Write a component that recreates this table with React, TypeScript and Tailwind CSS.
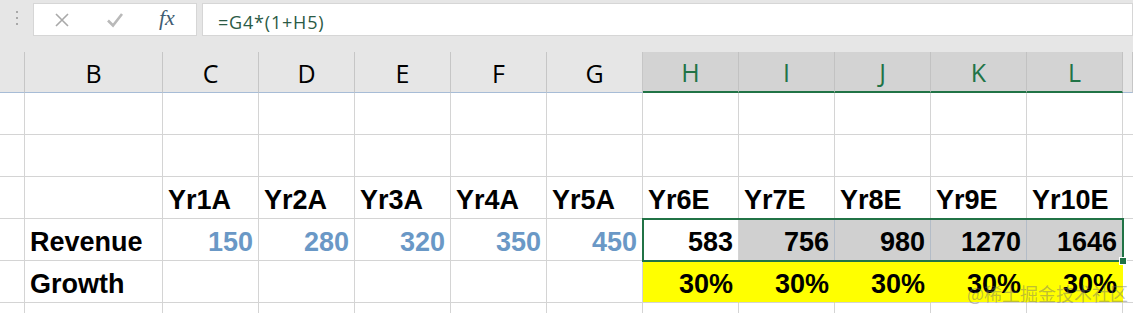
import React from 'react';

const COLS = ['A', 'B', 'C', 'D', 'E', 'F', 'G', 'H', 'I', 'J', 'K', 'L', 'M'];
const SELECTED = ['H', 'I', 'J', 'K', 'L'];

type CellData = {
  text?: string;
  align?: 'left' | 'right';
  tone?: 'black' | 'blue';
  fill?: 'none' | 'gray' | 'yellow';
};

const years = ['Yr1A', 'Yr2A', 'Yr3A', 'Yr4A', 'Yr5A', 'Yr6E', 'Yr7E', 'Yr8E', 'Yr9E', 'Yr10E'];
const actuals = ['150', '280', '320', '350', '450'];
const estimates = ['583', '756', '980', '1270', '1646'];

const empty = (): CellData[] => COLS.map(() => ({}));

const rows: CellData[][] = [
  empty(),
  empty(),
  [{}, {}, ...years.map((y) => ({ text: y, align: 'left' as const })), {}],
  [
    {},
    { text: 'Revenue', align: 'left' },
    ...actuals.map((n) => ({ text: n, align: 'right' as const, tone: 'blue' as const })),
    ...estimates.map((n, i) => ({
      text: n,
      align: 'right' as const,
      fill: i === 0 ? ('none' as const) : ('gray' as const),
    })),
    {},
  ],
  [
    {},
    { text: 'Growth', align: 'left' },
    {}, {}, {}, {}, {},
    ...estimates.map(() => ({ text: '30%', align: 'right' as const, fill: 'yellow' as const })),
    {},
  ],
  empty(),
];

const Cell: React.FC<{ cell: CellData }> = ({ cell }) => {
  let cls = 'h-[42px] border-b border-r flex items-end pb-[4px] px-[5px] leading-none ';
  if (cell.fill === 'gray') cls += 'bg-[#d0d0d0] border-r-[#b3bcc7] border-b-[#d4d4d4] ';
  else if (cell.fill === 'yellow') cls += 'bg-[#ffff00] border-r-[#ffff00] border-b-[#d4d4d4] ';
  else cls += 'bg-white border-[#d4d4d4] ';
  cls += cell.align === 'right' ? 'justify-end ' : 'justify-start ';
  cls += cell.tone === 'blue' ? 'text-[#6a98c6]' : 'text-black';
  return <div className={cls}>{cell.text}</div>;
};

const App: React.FC = () => {
  return (
    <div
      className="relative w-[1133px] h-[313px] overflow-hidden bg-white"
      style={{ fontFamily: '"Liberation Sans", Arial, sans-serif' }}
    >
      {/* formula bar */}
      <div className="h-[52px] bg-[#e6e6e6] pt-[3px] flex">
        <div className="w-[33px] flex flex-col items-center pt-[8px] gap-[4px]">
          <span className="w-[2px] h-[2px] bg-[#a8a8a8]" />
          <span className="w-[2px] h-[2px] bg-[#a8a8a8]" />
          <span className="w-[2px] h-[2px] bg-[#a8a8a8]" />
        </div>
        <div className="w-[164px] h-[33px] bg-white border border-[#d6d6d6] flex items-center">
          <svg width="14" height="14" viewBox="0 0 14 14" className="ml-[21px]">
            <path d="M1 1 L13 13 M13 1 L1 13" stroke="#a9a9a9" strokeWidth="1.6" fill="none" />
          </svg>
          <svg width="18" height="16" viewBox="0 0 18 16" className="ml-[37px]">
            <path d="M2 8.5 L7 13.5 L16 2" stroke="#b9b9b9" strokeWidth="2.6" fill="none" />
          </svg>
          <span
            className="ml-[35px] text-[22px] italic text-[#3f5d73] leading-none -mt-[3px]"
            style={{ fontFamily: '"Liberation Serif", serif' }}
          >
            fx
          </span>
        </div>
        <div className="ml-[5px] flex-1 h-[33px] bg-white border border-[#d6d6d6] pl-[15px] pt-[8px]">
          <span
            className="text-[18px] leading-none tracking-[0.8px] text-[#2b5a45]"
            style={{ fontFamily: '"Open Sans", sans-serif' }}
          >
            =G4*(1+H5)
          </span>
        </div>
      </div>

      {/* column headers */}
      <div
        className="grid grid-cols-[25px_138px_repeat(10,96px)_1fr] h-[41px] bg-[#e6e6e6]"
        style={{ fontFamily: '"Open Sans", sans-serif' }}
      >
        {COLS.map((c) => {
          const sel = SELECTED.includes(c);
          return (
            <div
              key={c}
              className={
                'flex items-end justify-center pb-[6px] text-[25px] leading-none border-r ' +
                (sel
                  ? 'bg-[#d3d3d3] text-[#217346] border-b-2 border-b-[#217346] border-r-[#c2c2c2]'
                  : 'text-black border-b border-b-[#a7bcd6] border-r-[#c6c6c6]')
              }
            >
              {c === 'A' || c === 'M' ? '' : c}
            </div>
          );
        })}
      </div>

      {/* cells */}
      <div className="relative">
        <div className="grid grid-cols-[25px_138px_repeat(10,96px)_1fr] text-[27px] font-bold">
          {rows.map((r, ri) =>
            r.map((cell, ci) => <Cell key={`${ri}-${ci}`} cell={cell} />)
          )}
        </div>
        {/* selection */}
        <div className="absolute left-[642px] top-[125px] w-[482px] h-[44px] border-2 border-[#217346]" />
        <div className="absolute left-[1119px] top-[164px] w-[8px] h-[8px] bg-[#217346] border border-white" />
      </div>

      {/* watermark */}
      <div
        className="absolute left-[967px] top-[284px] text-[18px] leading-none text-[rgba(110,110,110,0.45)]"
        style={{ fontFamily: '"Noto Sans CJK SC", sans-serif' }}
      >
        @稀土掘金技术社区
      </div>
    </div>
  );
};

export default App;
